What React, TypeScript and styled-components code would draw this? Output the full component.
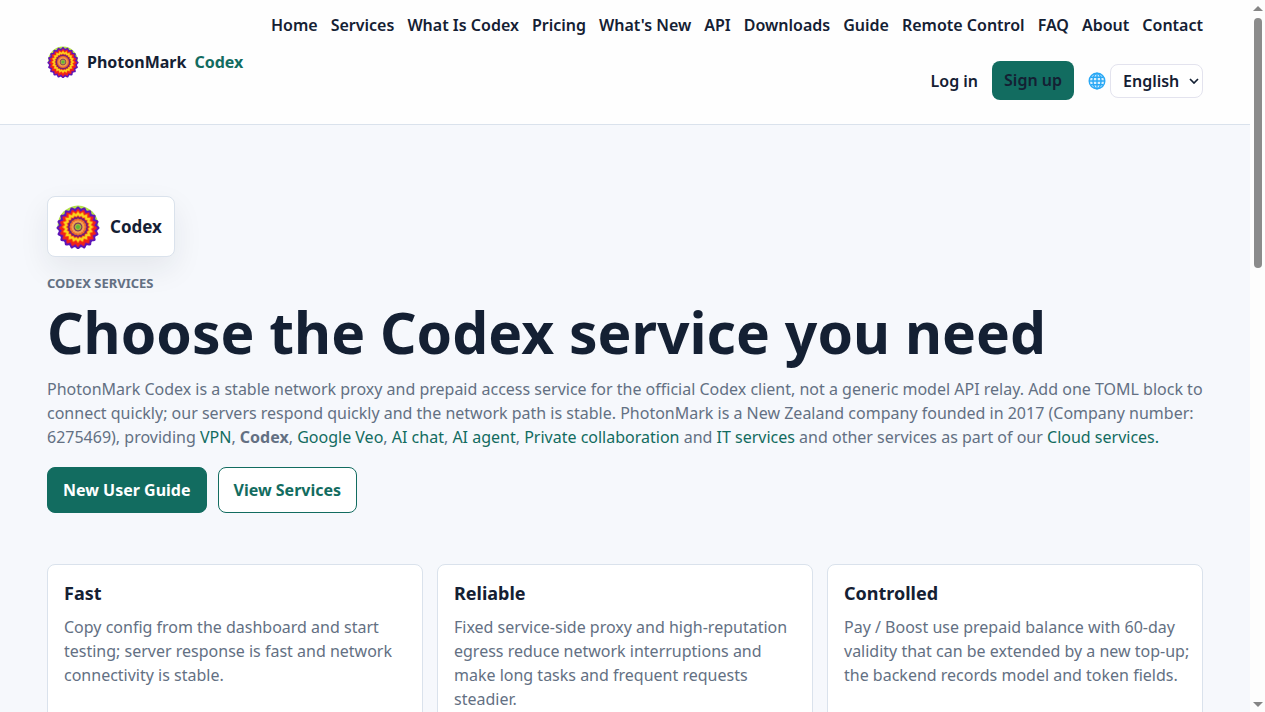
import React, { useState } from "react";
import styled, { createGlobalStyle, css } from "styled-components";

const ink = "#142033";
const muted = "#637083";
const green = "#126c60";
const line = "#dae2ec";

const GlobalStyle = createGlobalStyle`
  *, *::before, *::after { box-sizing: border-box; }
  body {
    margin: 0;
    background: #f6f8fc;
    color: ${ink};
    font: 16px/24px "Noto Sans", "Liberation Sans", sans-serif;
  }
  a { color: inherit; text-decoration: none; }
  h1, h2, p { margin: 0; }
`;

const Shell = styled.div`
  display: flex;
  height: 100vh;
  overflow: hidden;
`;

const Page = styled.div`
  flex: 1;
  min-width: 0;
  overflow-y: auto;
  scrollbar-width: none;
`;

const ScrollRail = styled.div`
  width: 15px;
  flex: none;
  display: flex;
  flex-direction: column;
  align-items: center;
  justify-content: space-between;
  padding: 6px 0 5px;
  background: #fdfdfd;
`;

const ScrollThumb = styled.div`
  width: 8px;
  height: 250px;
  margin: 7px 0 auto;
  border-radius: 4px;
  background: #8b8b8b;
`;

const Header = styled.header`
  display: flex;
  align-items: center;
  justify-content: space-between;
  gap: 20px;
  padding: 13px 47px;
  background: #fefefe;
  border-bottom: 1px solid ${line};
`;

const Brand = styled.a`
  display: flex;
  align-items: center;
  gap: 8px;
  font-weight: 700;
  white-space: nowrap;
`;

const Accent = styled.span`
  color: ${green};
`;

const Nav = styled.nav`
  display: flex;
  flex-direction: column;
  gap: 24px;
  padding-bottom: 11px;
`;

const NavRow = styled.div<{ $gap: number }>`
  display: flex;
  align-items: center;
  justify-content: flex-end;
  gap: ${(p) => p.$gap}px;
  font-weight: 600;
  white-space: nowrap;
`;

const SignUp = styled.a`
  padding: 7px 12px 8px;
  border-radius: 8px;
  background: ${green};
`;

const Language = styled.label`
  display: flex;
  align-items: center;
  gap: 4px;
`;

const SelectBox = styled.span`
  display: grid;
  align-items: center;
  & > * { grid-area: 1 / 1; }
  & > svg { justify-self: end; margin-right: 4px; pointer-events: none; }
`;

const Select = styled.select`
  appearance: none;
  width: 93px;
  height: 34px;
  padding: 0 12px;
  border: 1px solid #e3e3ee;
  border-radius: 8px;
  background: #fff;
  color: ${ink};
  font: inherit;
`;

const Main = styled.main`
  padding: 71px 47px 48px;
`;

const Badge = styled.div`
  display: inline-flex;
  align-items: center;
  gap: 10px;
  height: 61px;
  padding: 0 12px 0 8px;
  border: 1px solid ${line};
  border-radius: 8px;
  background: #fff;
  box-shadow: 0 12px 30px rgba(20, 32, 51, 0.08);
  font-size: 17px;
  font-weight: 700;
`;

const Eyebrow = styled.p`
  margin-top: 16px;
  font-size: 13px;
  line-height: 20px;
  font-weight: 700;
  color: ${muted};
  text-transform: uppercase;
`;

const Title = styled.h1`
  margin-top: 8px;
  font-size: 57px;
  line-height: 62px;
  font-weight: 700;
`;

const Lead = styled.p`
  margin-top: 14px;
  color: ${muted};
  a { color: ${green}; }
`;

const Actions = styled.div`
  display: flex;
  gap: 11px;
  margin-top: 18px;
`;

const Button = styled.a<{ $primary?: boolean }>`
  padding: 10px 15px;
  border: 1px solid ${green};
  border-radius: 8px;
  font-weight: 700;
  ${(p) =>
    p.$primary
      ? css`background: ${green}; color: #fff;`
      : css`background: #fff; color: ${green};`}
`;

const Cards = styled.section`
  display: grid;
  grid-template-columns: repeat(3, minmax(0, 1fr));
  gap: 14px;
  margin-top: 51px;
`;

const Card = styled.article`
  padding: 16px 10px 16px 16px;
  border: 1px solid ${line};
  border-radius: 8px;
  background: #fff;
`;

const CardTitle = styled.h2`
  font-size: 18px;
  line-height: 24px;
  font-weight: 700;
`;

const CardText = styled.p`
  margin-top: 10px;
  color: ${muted};
`;

const petals = (radius: number, depth: number, count: number) => {
  const points: string[] = [];
  const steps = count * 8;
  for (let i = 0; i < steps; i++) {
    const a = (i / steps) * Math.PI * 2;
    const r = radius + depth * Math.cos(a * count);
    points.push(`${(24 + r * Math.sin(a)).toFixed(2)},${(24 - r * Math.cos(a)).toFixed(2)}`);
  }
  return points.join(" ");
};

const rings: [number, number, number, string][] = [
  [21.4, 1.1, 20, "#5b16b8"],
  [19, 1.2, 20, "#b81468"],
  [18, 1.2, 20, "#f02418"],
  [15.6, 1.1, 20, "#fb7a12"],
  [14.4, 1, 20, "#fbd41c"],
  [11.8, 0.7, 20, "#f57a1a"],
  [10.9, 0.5, 20, "#b41a4c"],
  [10, 0.4, 20, "#6b2277"],
  [8.6, 0.3, 16, "#ef6a2c"],
  [6.8, 0.2, 16, "#f2a04c"],
  [4.6, 0, 8, "#7a3560"],
  [3.5, 0, 8, "#a8b03a"],
  [2, 0, 8, "#5cb83c"],
];

const Flower = ({ size }: { size: number }) => (
  <svg width={size} height={size} viewBox="1 1 46 46" aria-hidden="true">
    <path d="M2.6 23A21.4 21.4 0 0 1 45.4 23L40 28H8Z" fill="#b4e04a" />
    {rings.map(([r, d, n, fill], i) => (
      <polygon
        key={r}
        points={petals(r, d, n)}
        fill={fill}
        transform={i < 3 ? "translate(0 1)" : undefined}
      />
    ))}
  </svg>
);

const Globe = () => (
  <svg width="18" height="18" viewBox="0 0 18 18" fill="none" aria-hidden="true">
    <circle cx="9" cy="9" r="7.8" fill="#d8f0ff" />
    <g stroke="#29a8f5" strokeWidth="1.4">
      <circle cx="9" cy="9" r="7.8" />
      <ellipse cx="9" cy="9" rx="4" ry="7.8" />
      <path d="M9 1v16M1 9h16M2.6 5.2h12.8M2.6 12.8h12.8" />
    </g>
  </svg>
);

const Arrow = ({ down }: { down?: boolean }) => (
  <svg width="10" height="5" viewBox="0 0 10 5" aria-hidden="true">
    <path d={down ? "M0 0h10L5 5Z" : "M0 5h10L5 0Z"} fill="#858585" />
  </svg>
);

const links = ["Home", "Services", "What Is Codex", "Pricing", "What's New", "API", "Downloads", "Guide", "Remote Control", "FAQ", "About", "Contact"];

const cards = [
  ["Fast", "Copy config from the dashboard and start testing; server response is fast and network connectivity is stable."],
  ["Reliable", "Fixed service-side proxy and high-reputation egress reduce network interruptions and make long tasks and frequent requests steadier."],
  ["Controlled", "Pay / Boost use prepaid balance with 60-day validity that can be extended by a new top-up; the backend records model and token fields."],
];

export default function App() {
  const [language, setLanguage] = useState("English");
  return (
    <>
      <GlobalStyle />
      <Shell>
        <Page>
          <Header>
            <Brand href="#">
              <Flower size={32} />
              <span>PhotonMark</span>
              <Accent>Codex</Accent>
            </Brand>
            <Nav>
              <NavRow $gap={13}>
                {links.map((l) => (
                  <a key={l} href="#">{l}</a>
                ))}
              </NavRow>
              <NavRow $gap={14}>
                <a href="#">Log in</a>
                <SignUp href="#">Sign up</SignUp>
                <Language>
                  <Globe />
                  <SelectBox>
                    <Select aria-label="Language" value={language} onChange={(e) => setLanguage(e.target.value)}>
                      <option>English</option>
                    </Select>
                    <svg width="10" height="6" viewBox="0 0 10 6" fill="none" aria-hidden="true">
                      <path d="M1 1l4 4 4-4" stroke={ink} strokeWidth="1.7" />
                    </svg>
                  </SelectBox>
                </Language>
              </NavRow>
            </Nav>
          </Header>
          <Main>
            <Badge>
              <Flower size={44} />
              Codex
            </Badge>
            <Eyebrow>Codex services</Eyebrow>
            <Title>Choose the Codex service you need</Title>
            <Lead>
              PhotonMark Codex is a stable network proxy and prepaid access service for the official Codex client, not a
              generic model API relay. Add one TOML block to connect quickly; our servers respond quickly and the network
              path is stable. PhotonMark is a New Zealand company founded in 2017 (Company number: 6275469), providing{" "}
              <a href="#">VPN</a>, <strong>Codex</strong>, <a href="#">Google Veo</a>, <a href="#">AI chat</a>,{" "}
              <a href="#">AI agent</a>, <a href="#">Private collaboration</a> and <a href="#">IT services</a> and other
              services as part of our <a href="#">Cloud services.</a>
            </Lead>
            <Actions>
              <Button href="#" $primary>New User Guide</Button>
              <Button href="#">View Services</Button>
            </Actions>
            <Cards>
              {cards.map(([title, text]) => (
                <Card key={title}>
                  <CardTitle>{title}</CardTitle>
                  <CardText>{text}</CardText>
                </Card>
              ))}
            </Cards>
          </Main>
        </Page>
        <ScrollRail aria-hidden="true">
          <Arrow />
          <ScrollThumb />
          <Arrow down />
        </ScrollRail>
      </Shell>
    </>
  );
}
